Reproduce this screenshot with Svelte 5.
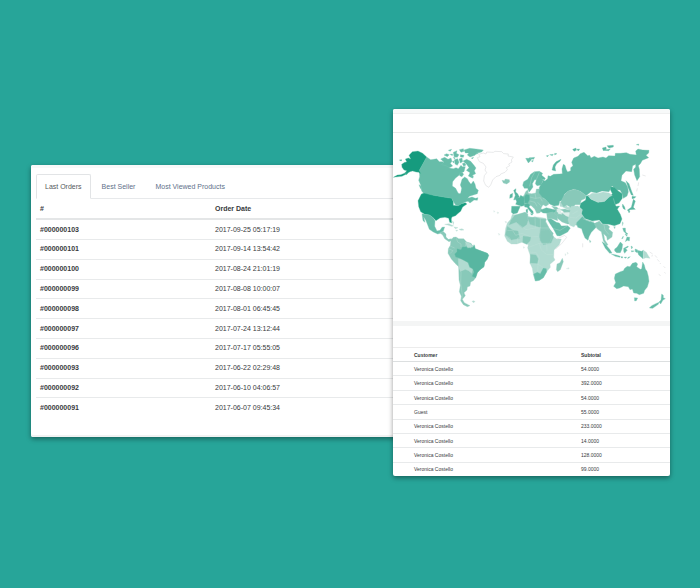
<script>
  const tabs = ['Last Orders', 'Best Seller', 'Most Viewed Products'];
  let active = $state(0);

  const orders = [
    ['#000000103', '2017-09-25 05:17:19'],
    ['#000000101', '2017-09-14 13:54:42'],
    ['#000000100', '2017-08-24 21:01:19'],
    ['#000000099', '2017-08-08 10:00:07'],
    ['#000000098', '2017-08-01 06:45:45'],
    ['#000000097', '2017-07-24 13:12:44'],
    ['#000000096', '2017-07-17 05:55:05'],
    ['#000000093', '2017-06-22 02:29:48'],
    ['#000000092', '2017-06-10 04:06:57'],
    ['#000000091', '2017-06-07 09:45:34']
  ];

  const customers = [
    ['Veronica Costello', '54.0000'],
    ['Veronica Costello', '392.0000'],
    ['Veronica Costello', '54.0000'],
    ['Guest', '55.0000'],
    ['Veronica Costello', '233.0000'],
    ['Veronica Costello', '14.0000'],
    ['Veronica Costello', '128.0000'],
    ['Veronica Costello', '99.0000']
  ];
</script>

<main>
  <section class="card orders">
    <div class="tabs" role="tablist">
      {#each tabs as tab, i}
        <button role="tab" aria-selected={active === i} class:active={active === i} onclick={() => (active = i)}>{tab}</button>
      {/each}
    </div>
    <table>
      <thead><tr><th scope="col">#</th><th scope="col">Order Date</th></tr></thead>
      <tbody>
        {#each orders as [id, date]}
          <tr><th scope="row">{id}</th><td>{date}</td></tr>
        {/each}
      </tbody>
    </table>
  </section>

  <section class="card sales">
    <div class="bar"></div>
    <svg class="map" viewBox="0 0 831 564" role="img" aria-label="Sales by country">
      <!-- North America -->
      <g transform="translate(-9 6)">
        <path class="c3" d="M110 66 122 74 131 73 140 71 148 80 158 80 163 88 175 92 178 99 190 101 198 98 205 101 213 91 217 95 226 95 222 110 213 113 208 120 196 130 188 140 187 153 197 160 203 172 207 176 212 175 215 160 211 150 216 133 224 126 232 131 236 139 243 148 250 138 255 147 258 160 265 166 262 176 250 180 238 184 233 190 246 186 256 190 264 188 262 196 252 195 240 204 234 199 228 200 215 206 205 212 196 209 185 190 160 186 130 181 102 176 95 168 92 150 86 136 89 125 88 106Z" />
        <path class="c5" d="M10 127 22 120 32 119 45 114 50 107 42 105 36 97 35 88 44 82 50 81 46 72 55 69 62 72 57 61 67 50 84 48 98 55 110 66 88 106 93 118 86 112 78 111 68 108 60 110 48 118 36 124ZM28 75 35 74 34 78ZM45 113 54 115 49 119Z" />
        <path class="c5" d="M94 177 102 174 130 181 160 186 185 190 190 200 190 211 205 212 215 206 226 203 231 207 218 216 212 229 203 236 197 242 186 246 184 252 185 264 179 262 176 250 165 247 150 249 138 257 128 247 118 240 104 238 92 230 86 215 84 197Z" />
        <path class="c3" d="M96 236 104 238 118 240 128 247 135 257 134 274 141 288 150 286 156 277 164 276 160 288 151 295 143 297 130 291 118 283 113 270 107 255 101 246 105 262 99 257Z" />
        <path class="c2" d="M149 293 159 289 168 297 168 306 175 313 184 311 187 316 177 320 164 311 158 300Z" />
        <path class="c3" d="M152 72 164 67 174 73 183 69 186 79 181 85 188 93 178 98 168 92 155 89 161 81ZM162 60 170 56 178 59 172 65ZM175 46 185 43 181 49ZM190 52 201 47 199 55 207 59 202 67 192 65ZM193 74 203 71 207 82 202 91 195 87ZM207 72 216 69 218 80 211 84ZM211 59 222 61 220 67 211 66ZM208 44 220 41 222 49 213 52ZM222 45 239 40 258 42 280 45 275 51 261 54 255 61 240 66 232 60 236 54 226 54ZM219 78 230 73 242 79 252 91 258 99 253 107 257 116 249 120 245 128 235 123 240 113 229 106 237 98 230 88ZM208 115 216 111 221 118 216 125 209 122ZM243 125 250 123 249 130ZM217 86 223 83 228 90 221 94ZM187 80 192 78 192 84ZM180 58 188 57 187 62ZM190 67 196 68 193 72ZM260 52 269 51 260 58ZM87 149 92 152 96 164 91 160ZM244 69 251 67 247 72Z" />
        <path class="c1" d="M164 268 177 266 191 273 184 274 173 270ZM192 276 204 278 196 281ZM187 258 191 261 190 269ZM207 283 216 281 222 285 213 286ZM197 286 203 286 201 289Z" />
      </g>
      <!-- South America -->
      <g transform="translate(-9 261)">
        <path class="c2" d="M183 60 190 52 198 51 206 56 221 56 230 66 243 70 250 80 254 76 255 86 268 91 292 100 296 106 292 117 284 127 282 140 270 149 262 158 257 173 250 182 242 186 240 198 232 201 231 210 222 218 226 227 217 238 223 248 240 257 232 260 220 254 212 242 214 229 208 215 211 196 207 180 206 140 195 130 184 117 174 100 175 86 181 76Z" />
        <path class="c1" d="M226 66 238 69 250 80 241 84 232 82ZM205 116 215 116 230 122 237 138 248 148 245 160 236 152 226 148 212 154 206 140Z" />
        <path class="c4" d="M194 102 201 95 201 86 213 89 217 81 229 80 233 85 249 82 252 74 256 86 268 91 292 100 296 106 292 117 284 127 282 140 270 149 262 158 257 173 246 169 252 156 248 146 239 142 235 128 218 119 207 114 197 111Z" />
        <path class="border" d="M199 55 203 66 213 72 213 81M177 87 189 92 180 101M208 144 213 158 212 190 217 224 215 239M229 69 225 80M242 85 240 71M180 78 194 84" />
        <path class="c1" d="M246 244 252 242 255 245 250 248Z" />
      </g>
      <!-- Greenland, Arctic islands and Europe -->
      <g transform="translate(261 6)">
        <path class="outline" d="M-8 68 0 65 -4 58 10 54 18 57 20 51 40 52 45 49 65 50 71 56 85 57 84 63 100 66 94 75 96 81 86 87 89 92 79 98 82 104 75 112 62 117 60 121 48 125 38 135 32 150 26 157 17 151 11 138 13 122 20 113 15 105 18 96 10 85 -2 80Z" />
        <path class="c2" d="M66 136 73 137 76 132 88 134 89 141 80 147 70 144Z" />
        <path class="c3" d="M137 70 147 70 150 67 154 74 149 80 145 84ZM151 68 164 67 161 73 153 72ZM154 78 160 76 158 81ZM199 62 206 61 202 66ZM209 59 220 58 217 62ZM224 55 231 56 224 60Z" />
        <path class="c4" d="M216 105 220 90 228 80 243 73 240 79 230 86 225 96 227 108Z" />
        <path class="c3" d="M128 151 131 140 143 133 152 118 163 110 178 109 188 115 183 124 188 137 184 150 171 152 166 146 169 134 164 134 157 146 159 156 152 166 147 172 143 160 133 160Z" />
        <path class="c2" d="M137 170 143 164 145 175 155 176 167 174 169 162 177 162 181 174 190 190 202 197 207 207 198 214 189 209 183 220 187 224 179 234 170 235 164 222 154 212 143 209 128 205 124 190 132 181Z" />
        <path class="c4" d="M133 185 138 178 148 180 149 193 144 204 134 204ZM106 190 119 187 122 181 134 188 132 201 135 211 125 214 107 208 110 200ZM95 214 121 214 117 223 112 234 100 237 94 232ZM101 166 108 161 107 171 113 176 118 185 108 193 101 195 106 181ZM90 179 98 175 97 187 89 190ZM134 208 143 205 150 210 147 216 159 229 160 236 154 234 141 217 134 216ZM151 236 159 236 156 241ZM138 224 143 222 143 233 139 233Z" />
        <path class="border" d="M165 110 155 128 149 154M178 112 169 134M150 186 165 190 181 188M150 198 165 202 171 214M165 175 168 191M181 188 187 199M173 202 184 214" />
        <path class="c3" d="M184 224 199 218 218 223 228 224 229 233 207 235 189 234 181 228Z" />
        <path class="c2" d="M215 214 230 216 238 223 249 228 254 237 258 257 269 265 279 266 290 253 295 239 284 225 270 226 255 222 237 224 227 229 220 236 211 235 209 243 221 248 239 249 251 260 254 253 250 236 232 231Z" />
        <path class="c1" d="M239 202 254 201 263 217 281 215 299 221 308 212 328 213 318 223 327 235 309 254 291 256 280 230 264 224 248 216 240 214Z" />
      </g>
      <!-- Africa and the Middle East -->
      <g transform="translate(261 141)">
        <path class="c1" d="M97 103 112 106 135 97 144 101 143 108 158 113 164 110 186 113 197 115 198 125 209 148 221 170 230 177 244 177 238 194 222 210 221 232 225 240 210 253 211 262 201 274 190 293 178 301 166 303 160 285 157 265 150 250 153 232 147 216 143 203 145 194 126 187 110 192 94 192 82 184 74 168 77 145 82 129 92 118Z" />
        <path class="c2" d="M105 105 135 97 143 103 144 122 140 134 127 143 108 127 87 135 93 120ZM142 112 165 112 181 116 199 118 196 125 209 147 220 160 208 190 185 190 178 170 182 143 150 133ZM129 168 153 171 150 183 140 193 128 187ZM181 151 207 149 221 171 213 190 190 194 180 181ZM151 223 168 225 175 237 172 251 150 250ZM82 139 99 151 114 153 119 175 94 180 76 166Z" />
        <path class="c3" d="M161 282 172 277 181 281 190 264 199 266 200 275 190 293 178 301 166 303ZM202 118 213 116 229 127 238 129 244 138 263 137 271 144 263 156 240 168 231 167 220 146 209 130Z" />
        <path class="c2" d="M200 100 218 96 232 108 233 122 216 116 202 117ZM231 104 251 100 270 90 294 93 300 110 299 139 278 132 262 132 246 126 234 116ZM229 269 231 252 240 248 247 235 250 245 241 269 233 275Z" />
        <path class="border" d="M108 127 138 149 165 144 182 143M165 112 166 143M181 116V144H207M82 151 98 152 107 166 126 160 153 171 178 169M143 203 178 190 214 190M147 216 169 218 178 234 174 253 191 263M178 190 184 210 200 224 221 224M200 190 201 214M151 250 174 252 173 275M220 146 240 151 263 137M93 191 90 174 76 166M113 190 113 174 129 168" />
        <path class="outline" d="M231 177 254 166 260 172 245 191 227 207" />
        <path class="c0" d="M230 88 240 84 242 94 246 103 235 101ZM246 98 266 97 278 101 274 114 257 107ZM75 124 81 126 77 129ZM55 160 60 163 57 166ZM41 92 45 94 42 97ZM51 96 57 98 53 101ZM261 217 265 219 263 223ZM255 221 258 223 256 227ZM259 266 267 263 267 267ZM130 200 134 202 131 205Z" />
      </g>
      <!-- Russia and Asia -->
      <g transform="translate(531 6)">
        <path class="c4 russia" d="M-91 118-86 120-74 130-76 134-86 132-75 138-67 131-66 122-59 124-49 118-32 117-23 116-24 102-20 88-15 91-11 104-7 111 2 107 2 98 9 92 5 82 11 69 24 64 31 56 42 52 53 62 59 61 63 69 73 64 84 69 99 66 108 69 116 62 135 63 136 55 151 55 169 53 180 58 199 60 197 48 204 42 218 45 237 46 236 54 228 61 236 68 217 76 211 86 205 92 208 103 209 125 201 137 194 120 191 103 197 96 197 88 188 92 185 110 168 108 156 121 153 137 166 143 173 156 175 171 171 183 160 190 157 177 150 165 138 164 126 152 117 170 96 168 80 174 63 170 48 182 31 169 11 163-4 168-17 178-18 194-31 199-34 211-48 213-61 207-71 195-83 187-93 174-92 157-82 140Z" />
        <path class="c4" d="M8 43 18 39 19 46 12 49ZM20 43 29 42 25 48ZM97 39 108 36 109 43 100 47ZM111 32 130 31 130 36 117 39ZM99 46 121 42 116 47ZM199 29 206 27 206 31ZM168 137 177 146 185 169 190 181 184 180 175 160Z" />
        <path class="c2" d="M-17 179-6 168 14 163 31 169 49 182 44 191 34 196 30 209 16 209 6 220-10 210-19 216-28 202Z" />
        <path class="c5b" d="M48 184 57 181 62 192 84 202 104 199 118 184 127 176 121 164 121 155 133 157 146 169 157 176 157 190 147 204 135 209 139 214 149 213 142 223 151 238 156 252 150 266 133 272 116 268 98 267 88 255 66 258 42 250 34 235 37 224 29 217 32 205 47 195Z" />
        <path class="c1" d="M54 183 66 175 85 175 99 171 117 174 127 181 118 186 104 199 84 202 62 192Z" />
        <path class="c4" d="M158 207 164 216 166 224 160 221 157 214ZM190 193 196 198 190 217 196 223 181 224 175 229 172 225 184 217ZM186 184 198 185 193 190 186 191ZM175 227 180 229 177 234Z" />
        <path class="c1" d="M4 214 24 213 37 224 34 236 45 251 24 257 12 276-1 271-6 255ZM40 251 72 260 70 267 46 261Z" />
        <path class="c3" d="M20 263 37 245 48 255 74 265 81 263 80 275 64 292 57 305 54 316 45 309 38 292 35 281 23 277Z" />
        <path class="c2" d="M73 266 88 258 96 267 112 269 119 275 116 282 128 292 126 306 112 316 110 305 101 296 104 314 114 329 110 332 100 318 94 290 86 285 80 280ZM131 275 136 275 134 281ZM157 260 160 264 157 272ZM58 315 63 319 60 323Z" />
        <path class="border" d="M135 207 130 190M38 251 60 260M102 270 105 285 117 299M7 237 25 227M0 247 18 249 34 236" />
        <path class="outline" d="M217 120 227 123M206 142 204 153M202 160 200 169" />
      </g>
      <!-- South-east Asia and Oceania -->
      <g transform="translate(531 261)">
        <path class="c3" d="M96 65 105 71 119 88 126 99 119 100 106 85ZM134 87 141 82 151 66 158 73 156 87 151 98 140 98 134 93ZM161 85 174 78 175 81 166 86 172 90 167 96 164 100 161 94ZM124 102 139 105 151 109 149 112 136 109ZM153 110 158 110 158 114 153 113ZM162 112 170 111 167 115ZM174 112 181 110 173 116ZM183 78 188 81 185 87ZM184 92 193 93 185 96ZM195 87 202 89 202 98 196 95ZM201 91 215 94 220 91 219 116 206 105ZM158 25 166 24 167 36 174 42 169 42 161 34ZM165 42 172 44 170 49ZM171 51 179 52 178 63 172 61 166 65ZM155 56 160 48 159 55Z" />
        <path class="c1" d="M220 91 229 97 235 107 240 115 228 113 220 116Z" />
        <path class="c3" d="M131 199 137 188 133 175 136 162 151 155 160 152 164 145 172 139 180 140 187 130 198 127 203 132 200 140 211 148 215 146 218 126 223 135 226 147 231 154 235 169 237 184 232 201 224 211 221 220 208 224 200 220 191 219 187 207 180 209 175 200 161 198 149 204 140 206ZM193 233 203 234 199 242 194 243ZM275 222 280 226 280 233 286 236 279 240 272 252 267 246 273 240ZM267 247 265 253 248 265 238 264 245 257 257 251Z" />
        <path class="outline" d="M239 96 248 102M244 108 249 107M255 106 261 113M262 118 268 125M270 129 272 132M281 139 286 144M266 163 272 167M283 157 287 160M38 70 38 82" />
      </g>
    </svg>
    <div class="divider"></div>
    <table>
      <thead><tr><th scope="col">Customer</th><th scope="col">Subtotal</th></tr></thead>
      <tbody>
        {#each customers as [name, total]}
          <tr><td>{name}</td><td>{total}</td></tr>
        {/each}
      </tbody>
    </table>
  </section>
</main>

<style>
  :global(body) {
    margin: 0;
    background: #27a599;
  }
  main {
    display: grid;
    grid-template-columns: 362fr 277fr;
    align-items: start;
    box-sizing: border-box;
    min-height: 100vh;
    padding: 109px 30px 60px 31px;
    font-family: 'Liberation Sans', Arial, sans-serif;
    color: #373a3c;
  }
  .card {
    background: #fff;
    border-radius: 2px;
    box-shadow: 0 2px 5px rgba(0, 0, 0, 0.4);
    overflow: hidden;
  }
  .orders {
    margin: 56px -8px 0 0;
    padding: 4px 0 20px 5px;
    box-shadow: inset 0 3px #f8f9f9, inset 0 -2px #f1f2f2, 0 2px 5px rgba(0, 0, 0, 0.4);
  }
  .sales {
    position: relative;
  }
  .tabs {
    display: flex;
    gap: 2px;
    margin-top: 5px;
    border-bottom: 1px solid #e7e9eb;
  }
  button {
    height: 25px;
    margin-bottom: -1px;
    padding: 0 8px;
    border: 1px solid transparent;
    border-radius: 2px 2px 0 0;
    background: none;
    font: 7px 'Liberation Sans', Arial, sans-serif;
    color: #60708a;
  }
  button.active {
    border-color: #e2e4e6;
    border-bottom-color: #fff;
    background: #fff;
    color: #55595c;
  }
  table {
    width: 100%;
    border-collapse: collapse;
    table-layout: fixed;
    text-align: left;
  }
  th,
  td {
    padding: 0;
  }
  .orders table {
    height: 218px;
    font-size: 7px;
    line-height: 12px;
  }
  .orders thead tr {
    height: 20px;
  }
  .orders th,
  .orders td {
    padding-left: 4px;
    border-bottom: 1px solid #e8eaeb;
  }
  .orders thead th {
    border-bottom: 2px solid #e4e6e7;
  }
  .orders tbody tr:last-child > * {
    border-bottom: 0;
  }
  .orders th:first-child {
    width: 171px;
  }
  .bar {
    height: 18px;
    margin-top: 4px;
    border-top: 1px solid #eff0f0;
    border-bottom: 1px solid #e8e9e9;
  }
  .sales::before {
    content: '';
    display: block;
    height: 4px;
    margin-bottom: -4px;
    background: #f7f9f9;
  }
  .map {
    display: block;
    width: 100%;
  }
  .divider {
    height: 5px;
    margin-bottom: 21px;
    background: #f4f5f5;
  }
  .sales table {
    height: 129px;
    border-top: 1px solid #ececec;
    font-size: 5px;
    line-height: 8px;
  }
  .sales thead tr {
    height: 14px;
  }
  .sales th,
  .sales td {
    border-bottom: 1px solid #e8eaeb;
  }
  .sales thead th {
    border-color: #dcdfe0;
  }
  .sales tbody tr:last-child td {
    border-bottom: 0;
  }
  .sales th:first-child,
  .sales td:first-child {
    width: 167px;
    padding-left: 21px;
  }
  path {
    stroke-width: 1;
    stroke-linejoin: round;
  }
  .c0 { fill: #dcefea; stroke: #d4e4e0; }
  .c1 { fill: #b1dbd1; stroke: #b9dfd6; }
  .c2 { fill: #88c9b9; stroke: #9ad2c5; }
  .c3 { fill: #67bda9; stroke: #7ac7b5; }
  .c4 { fill: #58b6a1; stroke: #71c1ae; }
  .c5 { fill: #169b7e; stroke: #6fc4ae; }
  .c5b { fill: #38a98f; stroke: #6fc4ae; }
  .russia { fill: #61baa6; }
  .border { fill: none; stroke: #c3e3dc; }
  .outline { fill: none; stroke: #dedfe1; stroke-width: 2; }
</style>
